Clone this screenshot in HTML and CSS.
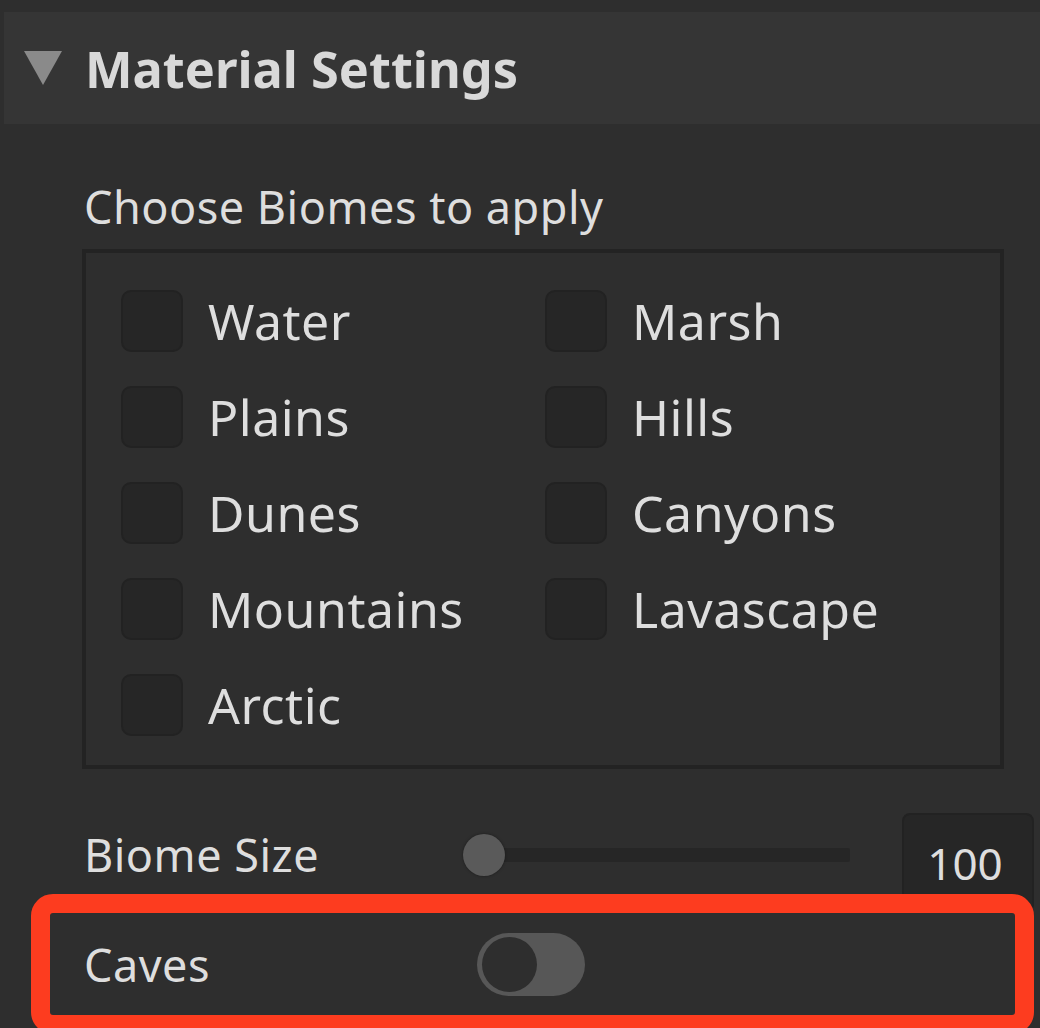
FILE: index.html
```html
<!DOCTYPE html>
<html lang="en">

<head>
  <meta charset="UTF-8">
  <title>Material Settings</title>
  <link rel="stylesheet" href="styles.css">
</head>

<body>

  <div class="panel">
    <div class="section-header">
      <svg class="caret" width="40" height="36" viewBox="0 0 40 36">
        <polygon points="1,1 39,1 20,35" />
      </svg>
      <span class="section-title">Material Settings</span>
    </div>

    <div class="section-body">
      <div class="field-label">Choose Biomes to apply</div>

      <div class="biome-box">
        <label class="biome"><span class="checkbox"></span>Water</label>
        <label class="biome"><span class="checkbox"></span>Marsh</label>
        <label class="biome"><span class="checkbox"></span>Plains</label>
        <label class="biome"><span class="checkbox"></span>Hills</label>
        <label class="biome"><span class="checkbox"></span>Dunes</label>
        <label class="biome"><span class="checkbox"></span>Canyons</label>
        <label class="biome"><span class="checkbox"></span>Mountains</label>
        <label class="biome"><span class="checkbox"></span>Lavascape</label>
        <label class="biome"><span class="checkbox"></span>Arctic</label>
      </div>

      <div class="slider-row">
        <span class="row-label">Biome Size</span>
        <div class="slider">
          <div class="slider-track"></div>
          <div class="slider-thumb"></div>
        </div>
        <div class="number-box">100</div>
      </div>

      <div class="toggle-row">
        <span class="row-label">Caves</span>
        <span class="toggle"><span class="toggle-knob"></span></span>
      </div>
    </div>
  </div>

</body>

</html>
```

FILE: styles.css
```css
body {
  margin: 0;
  height: 1028px;
  overflow: hidden;
  background: #2e2e2e;
  font-family: "Noto Sans", "Open Sans", sans-serif;
  color: #dedede;
}

.panel {
  padding-top: 12px;
}

.section-header {
  display: flex;
  align-items: center;
  gap: 22px;
  height: 112px;
  margin-left: 4px;
  padding-left: 19px;
  background: #353535;
}

.caret {
  fill: #8a8a8a;
}

.section-title {
  font-size: 50.5px;
  font-weight: 700;
  color: #d9d9d9;
}

.section-body {
  padding: 0 6px 0 50px;
}

.field-label {
  font-size: 45px;
  line-height: 52px;
  letter-spacing: 0.5px;
  margin: 57px 0 16px 34px;
}

.biome-box {
  display: grid;
  grid-template-columns: 424px 1fr;
  row-gap: 33px;
  margin: 0 30px 0 32px;
  padding: 36px 0 29px 35px;
  border: 4px solid #232323;
}

.biome {
  display: flex;
  align-items: center;
  gap: 25px;
  height: 63px;
  font-size: 50px;
  letter-spacing: 0.5px;
}

.checkbox {
  width: 62px;
  height: 62px;
  box-sizing: border-box;
  border-radius: 10px;
  background: #262626;
  border: 2px solid #222222;
}

.row-label {
  width: 413px;
  box-sizing: border-box;
  padding-left: 34px;
  font-size: 45px;
  letter-spacing: 0.5px;
}

.slider-row {
  display: flex;
  align-items: flex-start;
  height: 100px;
  margin-top: 44px;
}

.slider-row .row-label {
  line-height: 84px;
}

.slider {
  position: relative;
  display: flex;
  align-items: center;
  width: 387px;
  height: 84px;
}

.slider-track {
  flex: 1;
  height: 14px;
  margin-left: 21px;
  border-radius: 2px;
  background: #262626;
}

.slider-thumb {
  position: absolute;
  left: 0;
  top: 21px;
  width: 42px;
  height: 42px;
  border-radius: 50%;
  background: #5a5a5a;
  box-shadow: 0 0 3px rgba(0, 0, 0, 0.4);
}

.number-box {
  display: flex;
  align-items: center;
  justify-content: center;
  width: 132px;
  height: 100px;
  box-sizing: border-box;
  margin-left: 52px;
  padding-right: 6px;
  border: 2px solid #222222;
  border-radius: 8px;
  background: #262626;
  font-size: 44px;
}

.toggle-row {
  display: flex;
  align-items: center;
  height: 102px;
  margin-right: 19px;
  border-radius: 3px;
  outline: 19px solid #fd3c1f;
}

.toggle {
  display: block;
  width: 108px;
  height: 63px;
  box-sizing: border-box;
  margin-left: 14px;
  padding: 4px 5px;
  border-radius: 32px;
  background: #575757;
}

.toggle-knob {
  display: block;
  width: 55px;
  height: 55px;
  border-radius: 50%;
  background: #2e2e2e;
}
```
